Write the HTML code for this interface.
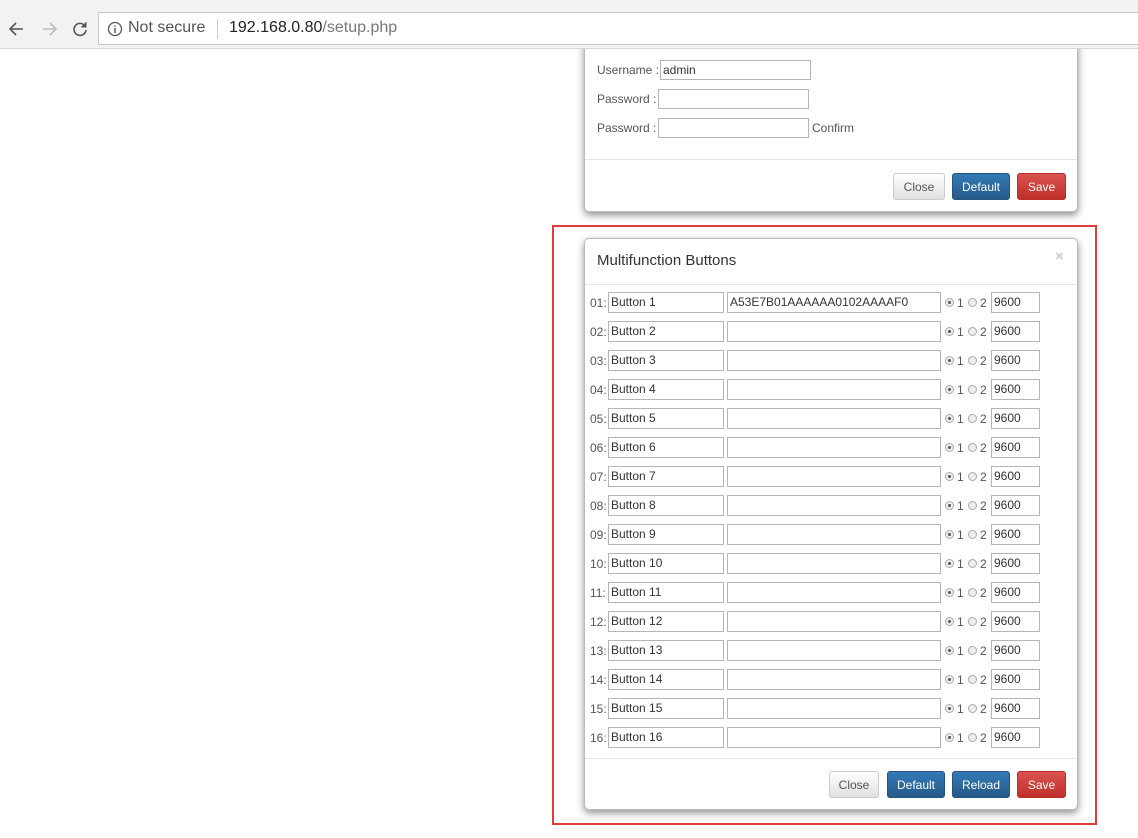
<!DOCTYPE html>
<html><head><style>
*{box-sizing:border-box;margin:0;padding:0}
body{width:1138px;height:838px;background:#fff;font-family:"Liberation Sans",Arial,sans-serif;position:relative;overflow:hidden;color:#333}
.a{position:absolute}
.bar{left:0;top:0;width:1138px;height:49px;background:#f2f2f2;border-bottom:1px solid #d6d6d6;z-index:5}
.url{left:98px;top:12px;width:1045px;height:33px;background:#fff;border:1px solid #c8c8c8;border-radius:2px;z-index:6}
.modal{background:#fff;border:1px solid #bbb;border-radius:5px;box-shadow:0 3px 8px rgba(0,0,0,.45)}
.inp{position:absolute;height:21px;border:1px solid #b5b5b5;background:#fff;font-size:12px;line-height:19px;padding-left:2px;color:#333}
.lbl{position:absolute;font-size:12px;color:#555}
.btn{position:absolute;height:27px;border-radius:3px;font-size:12px;text-align:center;line-height:26px;color:#fff}
.cl{background:linear-gradient(#fff,#e0e0e0);border:1px solid #ccc;color:#555}
.bl{background:linear-gradient(#337ab7,#265a88);border:1px solid #245580}
.rd{background:linear-gradient(#d9534f,#c12e2a);border:1px solid #b92c28}
.r{position:absolute;width:9px;height:9px;border-radius:50%;border:1px solid #aaa;background:#eee}
.r.on::after{content:"";position:absolute;left:2px;top:2px;width:3px;height:3px;border-radius:50%;background:#555}
.z{z-index:7}
</style></head><body>
<div class="a bar"></div>
<svg class="a z" style="left:8px;top:20px" width="80" height="18" viewBox="0 0 80 18">
<path d="M15 9H3M8 3L2 9l6 6" stroke="#555" stroke-width="1.6" fill="none"/>
<path d="M35 9h12M42 3l6 6-6 6" stroke="#bbb" stroke-width="1.6" fill="none"/>
<path d="M77 6a6 6 0 1 0 1 4" stroke="#555" stroke-width="1.6" fill="none"/><path d="M78 2v5h-5" fill="#555" stroke="#555" stroke-width="1"/>
</svg>
<div class="a url"></div>
<svg class="a z" style="left:107px;top:21px" width="16" height="16"><circle cx="8" cy="8" r="6.5" stroke="#555" stroke-width="1.3" fill="none"/><path d="M8 7v5M8 4.5v1.3" stroke="#555" stroke-width="1.5"/></svg>
<div class="a z" style="left:128px;top:19px;font-size:16px;color:#555">Not secure</div>
<div class="a z" style="left:217px;top:19px;width:1px;height:20px;background:#ccc"></div>
<div class="a z" style="left:229px;top:19px;font-size:16px;color:#222">192.168.0.80<span style="color:#777">/setup.php</span></div>

<div class="a modal" style="left:584px;top:30px;width:494px;height:182px;border-top:none;border-radius:0 0 5px 5px"></div>
<div class="lbl" style="left:597px;top:63px">Username : </div><div class="inp" style="left:660px;top:60px;width:151px;height:20px">admin</div>
<div class="lbl" style="left:597px;top:92px">Password :</div><div class="inp" style="left:658px;top:89px;width:151px;height:20px"></div>
<div class="lbl" style="left:597px;top:121px">Password :</div><div class="inp" style="left:658px;top:118px;width:151px;height:20px"></div>
<div class="lbl" style="left:812px;top:121px">Confirm</div>
<div class="a" style="left:585px;top:159px;width:492px;height:1px;background:#e5e5e5"></div>
<div class="btn cl" style="left:893px;top:173px;width:52px">Close</div>
<div class="btn bl" style="left:952px;top:173px;width:58px">Default</div>
<div class="btn rd" style="left:1017px;top:173px;width:49px">Save</div>

<div class="a" style="left:552px;top:225px;width:545px;height:600px;border:2px solid #e03c3c"></div>
<div class="a modal" style="left:584px;top:238px;width:494px;height:572px"></div>
<div class="a" style="left:597px;top:252px;font-size:15px;color:#333">Multifunction Buttons</div>
<div class="a" style="left:1055px;top:248px;font-size:15px;color:#ccc;font-weight:bold">×</div>
<div class="a" style="left:585px;top:284px;width:492px;height:1px;background:#e5e5e5"></div>
<div id="rows"></div>
<div class="a" style="left:585px;top:758px;width:492px;height:1px;background:#e5e5e5"></div>
<div class="btn cl" style="left:829px;top:771px;width:50px">Close</div>
<div class="btn bl" style="left:887px;top:771px;width:58px">Default</div>
<div class="btn bl" style="left:952px;top:771px;width:58px">Reload</div>
<div class="btn rd" style="left:1017px;top:771px;width:49px">Save</div>
<script>
var h='';
for(var i=1;i<=16;i++){var y=292+(i-1)*29;var n=(i<10?'0':'')+i;
h+='<div class="lbl" style="left:590px;top:'+(y+4)+'px">'+n+':</div>'+
'<div class="inp" style="left:608px;top:'+y+'px;width:116px">Button '+i+'</div>'+
'<div class="inp" style="left:727px;top:'+y+'px;width:214px">'+(i==1?'A53E7B01AAAAAA0102AAAAF0':'')+'</div>'+
'<div class="r on" style="left:945px;top:'+(y+6)+'px"></div><div class="lbl" style="left:957px;top:'+(y+4)+'px">1</div>'+
'<div class="r" style="left:968px;top:'+(y+6)+'px"></div><div class="lbl" style="left:980px;top:'+(y+4)+'px">2</div>'+
'<div class="inp" style="left:991px;top:'+y+'px;width:49px">9600</div>';}
document.getElementById('rows').innerHTML=h;
</script>
</body></html>
